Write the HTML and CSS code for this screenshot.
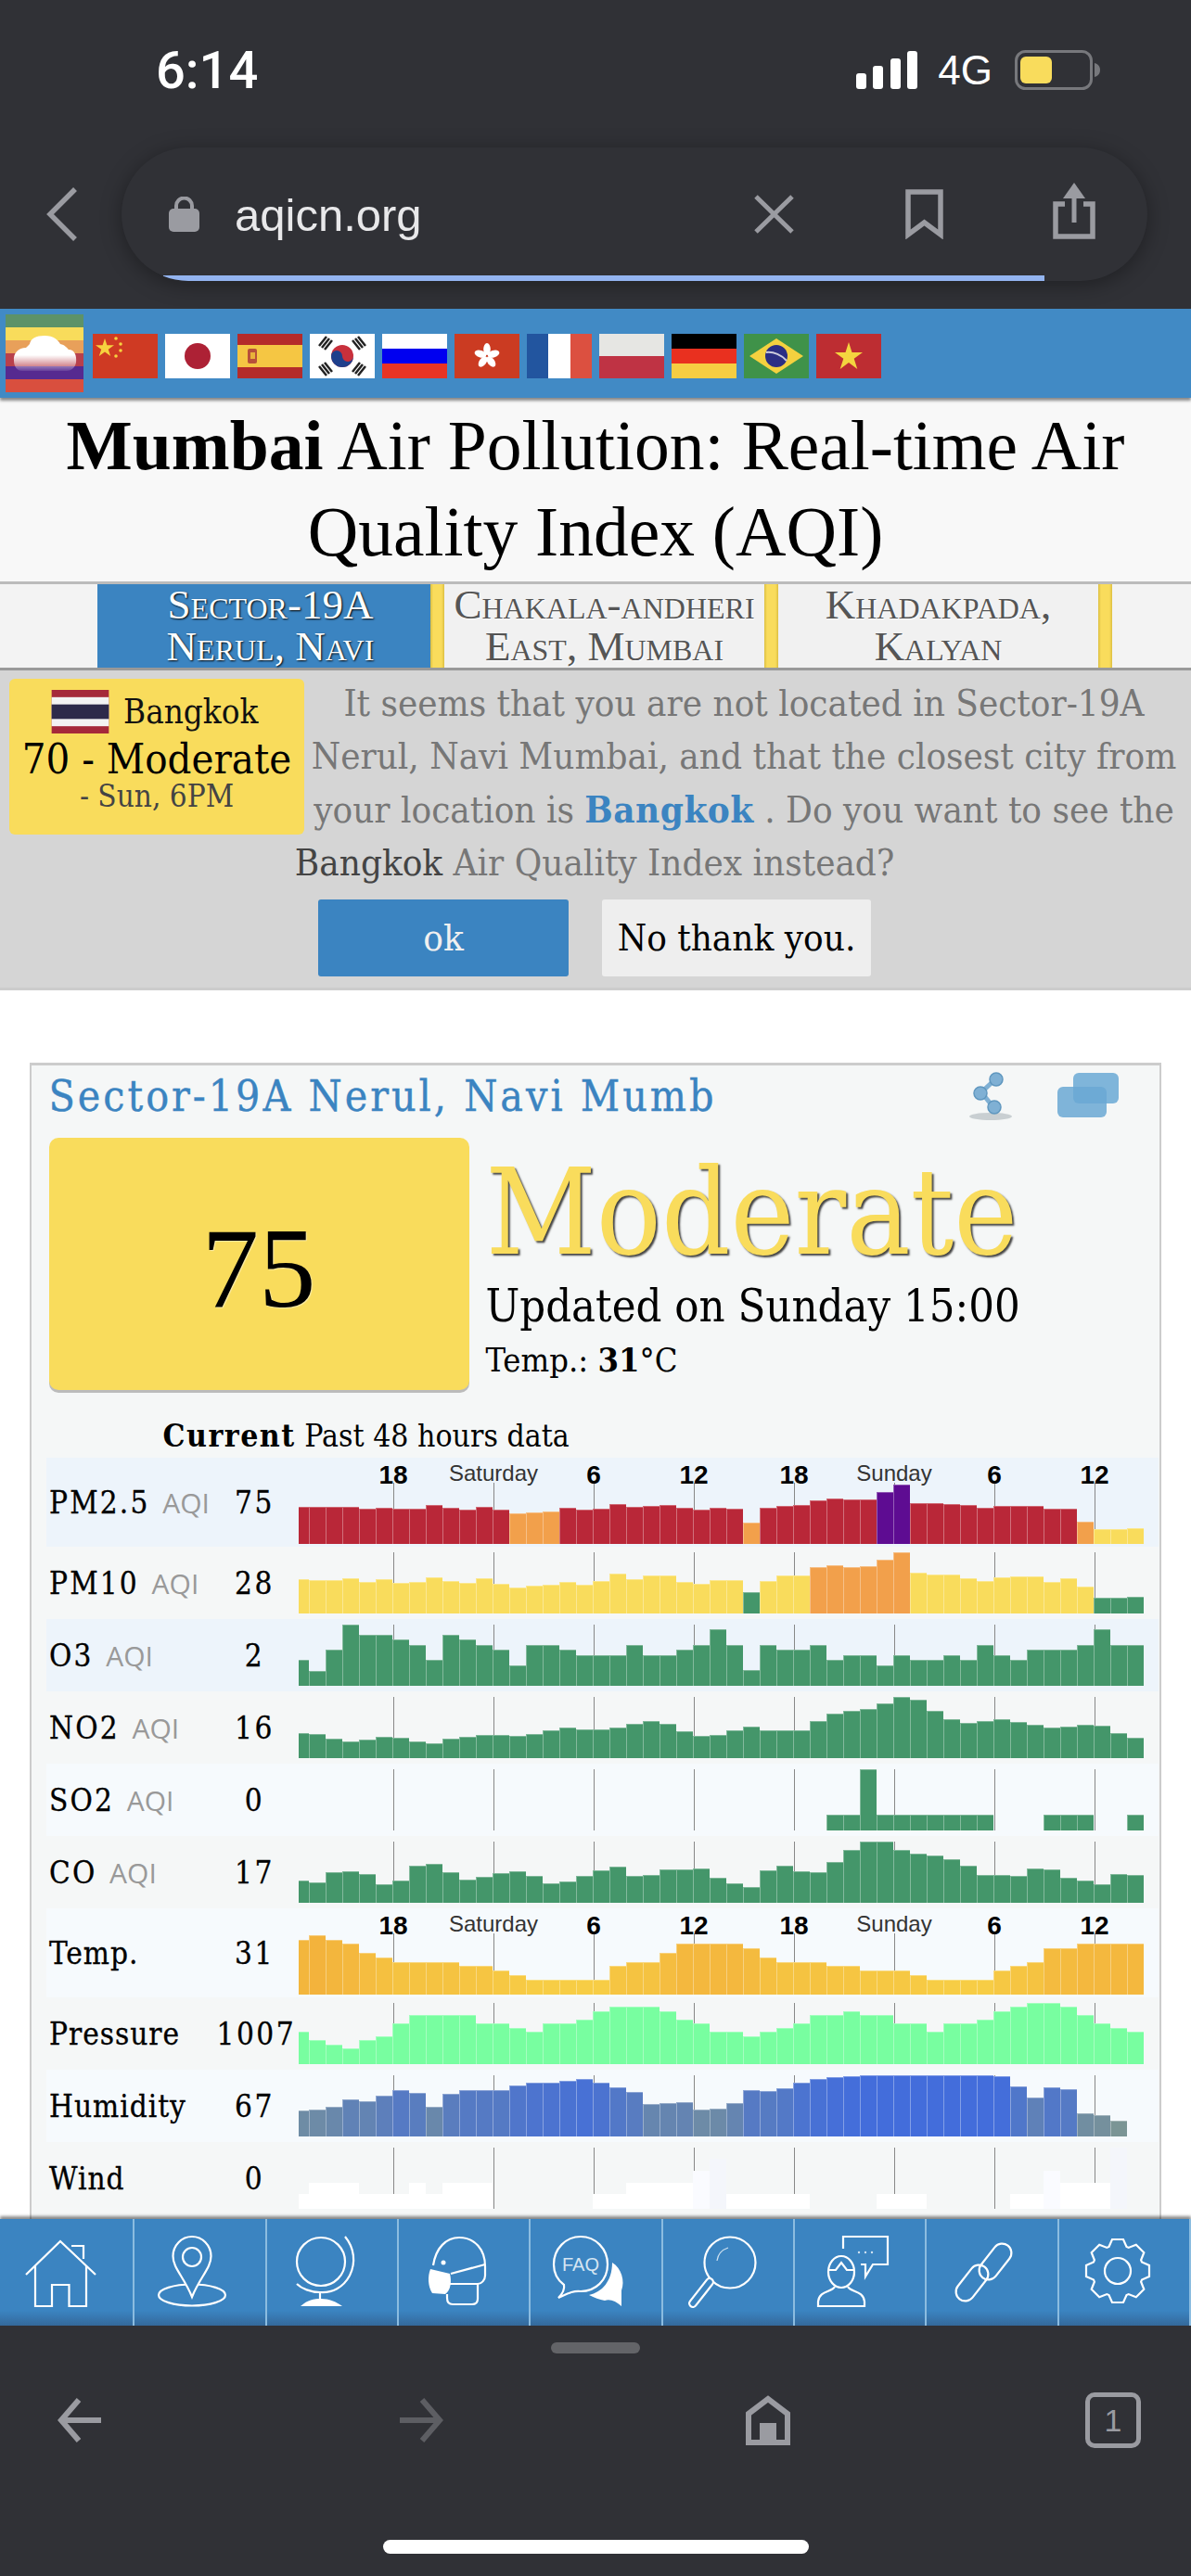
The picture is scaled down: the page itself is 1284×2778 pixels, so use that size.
FILE: index.html
```html
<!DOCTYPE html>
<html lang="en">
<head>
<meta charset="utf-8">
<title>Mumbai Air Pollution</title>
<link rel="stylesheet" href="styles.css">
</head>
<body>
<div class="phone">
  <header class="chrome-top">
    <div class="status">
      <span class="clock">6:14</span>
      <div class="status-right">
        <svg class="signal" width="66" height="41" viewBox="0 0 66 41"><rect x="0" y="24" width="11" height="17" rx="3"/><rect x="18" y="16" width="11" height="25" rx="3"/><rect x="37" y="8" width="11" height="33" rx="3"/><rect x="55" y="0" width="11" height="41" rx="3"/></svg>
        <span class="net">4G</span>
        <svg class="battery" width="93" height="43" viewBox="0 0 93 43"><rect x="1.500" y="1.500" width="81" height="40" rx="10" fill="none" stroke="#77787c" stroke-width="3"/><rect x="6" y="7" width="34" height="29" rx="6" fill="#f9dc5c"/><path d="M86 14c4 1 6 4 6 7.500s-2 6.500-6 7.500z" fill="#77787c"/></svg>
      </div>
    </div>
    <div class="toolbar">
      <svg class="tb-back" width="35" height="58" viewBox="0 0 35 58"><path d="M32 2 5 29 32 56" fill="none" stroke="#9a9ba1" stroke-width="5.500"/></svg>
      <div class="url">
        <svg width="33" height="38" viewBox="0 0 33 38"><path d="M8 16V10a8.500 8.500 0 0 1 17 0v6" fill="none" stroke="#9a9ba1" stroke-width="4"/><rect y="13" width="33" height="25" rx="5" fill="#9a9ba1"/></svg>
        <span class="host">aqicn.org</span>
        <svg class="u-x" width="43" height="42" viewBox="0 0 43 42"><path d="M2 2 41 40M41 2 2 40" stroke="#9a9ba1" stroke-width="5"/></svg>
        <svg class="u-mark" width="41" height="54" viewBox="0 0 41 54"><path d="M3 3H38V49L20.500 36 3 49Z" fill="none" stroke="#9a9ba1" stroke-width="5.500"/></svg>
        <svg class="u-share" width="48" height="61" viewBox="0 0 48 61"><path d="M14 23H4V58H44V23H34" fill="none" stroke="#9a9ba1" stroke-width="5.500"/><path d="M24 14V43" stroke="#9a9ba1" stroke-width="5"/><path d="M24 0 36 17H12Z" fill="#9a9ba1"/></svg>
        <div class="progress"></div>
      </div>
    </div>
  </header>

  <main class="page">
    <div class="flagbar">
      <svg class="logo" width="84" height="84" viewBox="0 0 84 84">
        <defs><linearGradient id="cl" x1="0" y1="0" x2="0" y2="1"><stop offset=".55" stop-color="#fff"/><stop offset="1" stop-color="#fff" stop-opacity=".1"/></linearGradient></defs>
        <rect width="84" height="14" fill="#5d9268"/><rect y="14" width="84" height="14" fill="#f8dc5b"/><rect y="28" width="84" height="14" fill="#e8a05a"/><rect y="42" width="84" height="14" fill="#b8404c"/><rect y="56" width="84" height="14" fill="#562a90"/><rect y="70" width="84" height="14" fill="#d94f3e"/>
        <path d="M9 50C8 42 14 36 22 36 24 34 25 33 26 32 27 26 33 23 42 23 52 23 57 28 59 32 64 33 66 36 68 38 74 38 77 44 76 52 75 58 70 61 66 61H18C12 61 9 56 9 50Z" fill="url(#cl)"/>
      </svg>
      <div class="flags">
        <svg class="flag" viewBox="0 0 70 48"><rect width="70" height="48" fill="#cf3a23"/><path d="M13 5 15.400 12.300 23 12.300 16.800 16.800 19.200 24 13 19.600 6.800 24 9.200 16.800 3 12.300 10.600 12.300Z" fill="#f6d23f"/><g fill="#f6d23f"><circle cx="25" cy="5" r="1.800"/><circle cx="30" cy="11" r="1.800"/><circle cx="30" cy="18" r="1.800"/><circle cx="25" cy="24" r="1.800"/></g></svg>
        <svg class="flag" viewBox="0 0 70 48"><rect width="70" height="48" fill="#fff"/><circle cx="35" cy="24" r="14" fill="#ad2135"/></svg>
        <svg class="flag" viewBox="0 0 70 48"><rect width="70" height="48" fill="#b42b2a"/><rect y="12" width="70" height="24" fill="#f5c643"/><rect x="11" y="16" width="10" height="16" rx="2" fill="#b8503a"/><rect x="14" y="20" width="5" height="7" fill="#e8b23a"/></svg>
        <svg class="flag" viewBox="0 0 70 48"><rect width="70" height="48" fill="#fff"/><circle cx="35" cy="24" r="12" fill="#c8303c"/><path d="M23 24A6 6 0 0 1 35 24 6 6 0 0 0 47 24 12 12 0 0 1 23 24Z" fill="#1f3f8c"/><g stroke="#222" stroke-width="2.500"><path d="M10 13 18 3M13 15 21 5M16 17 24 7"/><path d="M46 7 54 17M49 5 57 15M52 3 60 13"/><path d="M10 35 18 45M13 33 21 43M16 31 24 41"/><path d="M46 41 54 31M49 43 57 33M52 45 60 35"/></g></svg>
        <svg class="flag" viewBox="0 0 70 48"><rect width="70" height="16" fill="#fff"/><rect y="16" width="70" height="16" fill="#0000f0"/><rect y="32" width="70" height="16" fill="#e93424"/></svg>
        <svg class="flag" viewBox="0 0 70 48"><rect width="70" height="48" fill="#cb3b22"/><g fill="#fff"><ellipse cx="35" cy="16.500" rx="3.800" ry="6.500"/><ellipse cx="42.100" cy="21.700" rx="3.800" ry="6.500" transform="rotate(72 42.100 21.700)"/><ellipse cx="39.400" cy="30" rx="3.800" ry="6.500" transform="rotate(144 39.400 30)"/><ellipse cx="30.600" cy="30" rx="3.800" ry="6.500" transform="rotate(216 30.600 30)"/><ellipse cx="27.900" cy="21.700" rx="3.800" ry="6.500" transform="rotate(288 27.900 21.700)"/></g></svg>
        <svg class="flag" viewBox="0 0 70 48"><rect width="23" height="48" fill="#22559f"/><rect x="23" width="24" height="48" fill="#fff"/><rect x="47" width="23" height="48" fill="#dc5040"/></svg>
        <svg class="flag" viewBox="0 0 70 48"><rect width="70" height="24" fill="#e6e6e3"/><rect y="24" width="70" height="24" fill="#bf3344"/></svg>
        <svg class="flag" viewBox="0 0 70 48"><rect width="70" height="16" fill="#000"/><rect y="16" width="70" height="16" fill="#e9301f"/><rect y="32" width="70" height="16" fill="#f6cd42"/></svg>
        <svg class="flag" viewBox="0 0 70 48"><rect width="70" height="48" fill="#3f9249"/><path d="M35 5 64 24 35 43 6 24Z" fill="#f4d13f"/><circle cx="35" cy="24" r="12" fill="#2b2f84"/><path d="M24 20C32 19 41 23 46 29" stroke="#ccd" stroke-width="2" fill="none"/></svg>
        <svg class="flag" viewBox="0 0 70 48"><rect width="70" height="48" fill="#bd2d32"/><path d="M35 9 38.500 20 50 20 40.700 26.800 44.300 38 35 31 25.700 38 29.300 26.800 20 20 31.500 20Z" fill="#f4d53f"/></svg>
      </div>
    </div>

    <h1 class="title"><b>Mumbai</b> Air Pollution: Real-time Air Quality Index (AQI)</h1>

    <nav class="tabs">
      <a class="tab tab-active">Sector-19A<br>Nerul, Navi</a>
      <a class="tab tab-two">Chakala-andheri<br>East, Mumbai</a>
      <a class="tab tab-three">Khadakpada,<br>Kalyan</a>
    </nav>

    <section class="notice">
      <div class="near">
        <div class="near-city">
          <svg width="63" height="47" viewBox="0 0 63 48"><rect width="63" height="48" fill="#a5293a"/><rect y="8" width="63" height="32" fill="#f3f3f3"/><rect y="16" width="63" height="16" fill="#2d2a4a"/></svg>
          <span>Bangkok</span>
        </div>
        <div class="near-aqi">70 - Moderate</div>
        <div class="near-time">- Sun, 6PM</div>
      </div>
      <p class="notice-text">It seems that you are not located in Sector-19A<br>Nerul, Navi Mumbai, and that the closest city from<br>your location is <a class="city-link">Bangkok</a> . Do you want to see the<br><span class="city-dark">Bangkok</span> Air Quality Index instead?</p>
      <div class="notice-actions">
        <a class="btn btn-ok">ok</a>
        <a class="btn btn-no">No thank you.</a>
      </div>
    </section>

    <section class="card">
      <div class="card-head">
        <h2 class="station">Sector-19A Nerul, Navi Mumb</h2>
        <svg class="ic-share" width="46" height="52" viewBox="0 0 46 52"><ellipse cx="23" cy="48" rx="23" ry="4" fill="#c9cfd2"/><g fill="#7fb0d4" stroke="#5f97bf" stroke-width="1.500"><path d="M29 7 13 22 26 38" fill="none" stroke="#7fb0d4" stroke-width="5"/><circle cx="29" cy="8" r="7"/><circle cx="12" cy="23" r="7"/><circle cx="27" cy="38" r="7"/></g></svg>
        <svg class="ic-copy" width="66" height="48" viewBox="0 0 66 48"><rect x="17" width="49" height="33" rx="6" fill="#7fb5da"/><rect y="15" width="53" height="33" rx="6" fill="#6aa8d3" fill-opacity=".85"/></svg>
      </div>
      <div class="summary">
        <div class="aqi-box">75</div>
        <div class="summary-text">
          <div class="level">Moderate</div>
          <div class="updated">Updated on Sunday 15:00</div>
          <div class="temp">Temp.: <b>31</b>°C</div>
        </div>
      </div>
      <div class="table-head"><b>Current</b> Past 48 hours data</div>
      <div class="table">
        <div class="row row-tint ticked"><div class="name">PM2.5 <i>AQI</i></div><div class="val">75</div><div class="chart" data-series="pm25"></div></div>
        <div class="row"><div class="name">PM10 <i>AQI</i></div><div class="val">28</div><div class="chart" data-series="pm10"></div></div>
        <div class="row row-tint"><div class="name">O3 <i>AQI</i></div><div class="val">2</div><div class="chart" data-series="o3"></div></div>
        <div class="row"><div class="name">NO2 <i>AQI</i></div><div class="val">16</div><div class="chart" data-series="no2"></div></div>
        <div class="row row-pale"><div class="name">SO2 <i>AQI</i></div><div class="val">0</div><div class="chart" data-series="so2"></div></div>
        <div class="row"><div class="name">CO <i>AQI</i></div><div class="val">17</div><div class="chart" data-series="co"></div></div>
        <div class="row row-pale ticked"><div class="name name-plain">Temp.</div><div class="val">31</div><div class="chart" data-series="temp"></div></div>
        <div class="row"><div class="name name-plain">Pressure</div><div class="val">1007</div><div class="chart" data-series="pressure"></div></div>
        <div class="row row-pale"><div class="name name-plain">Humidity</div><div class="val">67</div><div class="chart" data-series="humidity"></div></div>
        <div class="row"><div class="name name-plain">Wind</div><div class="val">0</div><div class="chart" data-series="wind"></div></div>
      </div>
    </section>
  </main>

  <nav class="dock">
    <a class="dock-item"><svg viewBox="0 0 80 80"><path d="M3 43 40 7 78 43M13 34V77H31V54H49.500V77H68V34M52 12H65V26"/></svg></a>
    <a class="dock-item"><svg viewBox="0 0 80 80"><ellipse cx="40" cy="65" rx="36" ry="11.500"/><path class="solid" d="M40 67C31 45 19.500 36 19.500 23A20.500 21 0 0 1 60.500 23C60.500 36 49 45 40 67Z"/><circle cx="40" cy="24" r="10"/></svg></a>
    <a class="dock-item"><svg viewBox="0 0 80 80"><circle cx="36" cy="29" r="26"/><path d="M62 2C72 14 74 30 67 44 60 57 48 63 35 62 25 62 15 58 10 53"/><path d="M35 62V69"/><path class="white" d="M14 77C22 70 28 69 36 69 45 69 52 72 59 77Z"/></svg></a>
    <a class="dock-item"><svg viewBox="0 0 80 80"><path d="M15 33C18 14 29 3 43 3 60 3 71 16 71 34V44C71 49 67 53 63 53H30M63 53V69C63 73 61 75 57 75H36C32 75 30 72 30 68V64"/><path d="M34 42 71 32"/><circle class="white" cx="26" cy="30" r="2.500"/><path class="white" d="M12 37 33 42C35 50 34 60 28 64L14 63C9 55 9 45 12 37Z"/></svg></a>
    <a class="dock-item"><svg viewBox="0 0 80 80"><path d="M14 54C6 48 3 41 3 32 3 15 16 2 32 2 48 2 61 15 61 32 61 49 48 61 32 61 24 60 17 64 8 68 13 63 15 59 14 54Z"/><text class="faq" x="32" y="39" text-anchor="middle">FAQ</text><path class="white" d="M66 30C76 36 80 50 76 60L76 77C70 72 64 69 58 71 52 70 47 68 41 65 55 62 66 50 66 30Z"/></svg></a>
    <a class="dock-item"><svg viewBox="0 0 80 80"><circle cx="50" cy="30" r="27.500"/><path d="M36 28C37 20 42 16 48 14" class="thin"/><path class="handle-out" d="M28 51 10 74"/><path class="handle-in" d="M28 51 10 74"/></svg></a>
    <a class="dock-item"><svg viewBox="0 0 80 80"><path d="M30 15V2H78V32H62L54 45V32H49"/><g class="dots"><circle cx="47" cy="19" r="1.200"/><circle cx="54" cy="19" r="1.200"/><circle cx="61" cy="19" r="1.200"/></g><ellipse cx="28" cy="40" rx="14" ry="17"/><path d="M14 38H22L28 30 34 38H42"/><path d="M21 56C18 62 4 60 3 72V77H53V72C52 60 38 62 35 56"/></svg></a>
    <a class="dock-item"><svg viewBox="0 0 80 80"><rect x="42" y="7" width="20" height="44" rx="10" transform="rotate(38 52 29)"/><rect x="17" y="30" width="20" height="44" rx="10" transform="rotate(38 27 52)"/></svg></a>
    <a class="dock-item"><svg viewBox="0 0 80 80"><g transform="translate(41 39)"><polygon points="-9.500,-26 -6,-34 6,-34 9.500,-26 11.670,-25.100 19.800,-28.300 28.300,-19.800 25.100,-11.670 26,-9.500 34,-6 34,6 26,9.500 25.100,11.670 28.300,19.800 19.800,28.300 11.670,25.100 9.500,26 6,34 -6,34 -9.500,26 -11.670,25.100 -19.800,28.300 -28.300,19.800 -25.100,11.670 -26,9.500 -34,6 -34,-6 -26,-9.500 -25.100,-11.670 -28.300,-19.800 -19.800,-28.300 -11.670,-25.100"/><circle r="14"/></g></svg></a>
  </nav>

  <footer class="chrome-bottom">
    <div class="handle"></div>
    <div class="bottom-icons">
      <svg width="49" height="48" viewBox="0 0 49 48"><path d="M49 24H5M25 2 6 24 25 46" fill="none" stroke="#9a9ba1" stroke-width="6"/></svg>
      <svg width="49" height="48" viewBox="0 0 49 48"><path d="M0 24H44M24 2 43 24 24 46" fill="none" stroke="#5d5e63" stroke-width="6"/></svg>
      <svg width="48" height="54" viewBox="0 0 48 54"><path d="M3 20 24 4 45 20V51H3Z" fill="none" stroke="#9a9ba1" stroke-width="6"/><rect x="15" y="30" width="18" height="21" fill="#9a9ba1"/></svg>
      <div class="tabs-count">1</div>
    </div>
    <div class="home-indicator"></div>
  </footer>
</div>
<script src="script.js"></script>
</body>
</html>
```
FILE: styles.css
```css
* { box-sizing: border-box; }
html, body { margin: 0; padding: 0; }
body { font-family: "DejaVu Serif Condensed", "DejaVu Serif", serif; background: #303136; }
a { text-decoration: none; }
.phone { width: 1284px; height: 2778px; display: flex; flex-direction: column; overflow: hidden; }

/* browser chrome */
.chrome-top { height: 333px; background: #303136; flex: none; }
.status { height: 159px; display: flex; justify-content: space-between; padding: 54px 97px 0 168px; align-items: flex-start; }
.clock { font: 500 56px/44px Roboto, sans-serif; color: #fff; }
.status-right { display: flex; align-items: center; gap: 22px; height: 43px; }
.signal { fill: #fff; }
.net { font: 44px/43px "Liberation Sans", sans-serif; color: #fff; }
.battery { margin-left: 2px; }
.toolbar { display: flex; padding-left: 49px; }
.tb-back { margin: 43px 47px 0 0; }
.url { position: relative; width: 1106px; height: 144px; border-radius: 72px; background: #303136; box-shadow: 0 4px 22px rgba(0,0,0,.35); display: flex; align-items: flex-start; padding-left: 51px; overflow: hidden; }
.url > svg { flex: none; margin-top: 53px; }
.host { font: 49px/48px "Liberation Sans", sans-serif; color: #e8e8ea; margin: 49px 0 0 38px; width: 361px; }
.url .u-x { margin: 51px 0 0 199px; }
.url .u-mark { margin: 45px 0 0 120px; }
.url .u-share { margin: 38px 0 0 117px; }
.progress { position: absolute; left: 45px; bottom: 0; width: 950px; height: 6px; background: #93b4f0; }

/* page */
.page { flex: 1; min-height: 0; background: #fff; overflow: hidden; }
.flagbar { height: 96px; background: #418ac5; display: flex; padding: 6px 0 0 6px; box-shadow: 0 3px 3px rgba(0,0,0,.45); position: relative; }
.flags { display: flex; gap: 8px; margin: 21px 0 0 10px; height: 48px; }
.flag { width: 70px; height: 48px; display: block; }
.title { margin: 0; height: 198px; padding-top: 6px; background: #f8f8f8; text-align: center; font: 400 75.500px/92.500px "Liberation Serif", serif; color: #000; }
.tabs { display: flex; height: 96px; padding-left: 105px; background: #f3f3f3; border-top: 3px solid #bbb; border-bottom: 3px solid #999; font: 45px/45px "Liberation Serif", serif; font-variant: small-caps; }
.tab { display: block; text-align: center; color: #555; padding-right: 15px; text-shadow: 1px 1px 1px #fff; --face: #f1f1f1; background: linear-gradient(90deg, var(--face) calc(100% - 15px), #dcbf42 calc(100% - 15px), #f9dc5c calc(100% - 12px), #f9dc5c calc(100% - 3px), #dcbf42 100%); }
.tab-active { width: 374px; padding-left: 14px; --face: #3b84c1; color: #fff; text-shadow: 1px 1px 2px #000; }
.tab-two { width: 360px; }
.tab-three { width: 360px; }
.notice { height: 345px; padding: 7px 8px 0 6px; background: #d5d5d5; border-bottom: 3px solid #ccc; color: #777; }
.near { float: left; width: 318px; height: 168px; margin: 2px 0 0 4px; background: #f9dc5c; border-radius: 6px; text-align: center; color: #000; }
.near-city { display: flex; align-items: center; gap: 15px; padding: 10px 0 0 45px; height: 61px; font-size: 36.500px; color: #111; }
.near-aqi { font-size: 45px; line-height: 52px; white-space: nowrap; }
.near-time { font-size: 33px; line-height: 28px; color: #444; white-space: nowrap; }
.notice-text { margin: 0; font-size: 40px; line-height: 57px; text-align: center; white-space: nowrap; }
.city-link { color: #3b84c1; font-weight: 700; letter-spacing: .5px; }
.city-dark { color: #444; }
.notice-actions { display: flex; justify-content: center; gap: 36px; margin-top: 11px; }
.btn { display: block; height: 83px; line-height: 83px; text-align: center; font-size: 40px; border-radius: 3px; }
.btn-ok { width: 270px; background: #3b84c1; color: #f0f0f0; }
.btn-no { width: 290px; background: #eee; color: #000; }

/* card */
.card { margin: 78px 32px 0; border: 2.500px solid #ccc; border-top-width: 3px; background: #f5f7f7; height: 1300px; padding-left: 15.500px; }
.card-head { display: flex; height: 78px; align-items: flex-start; }
.station { margin: 6px 0 0 3px; width: 992px; font-size: 46px; line-height: 54px; font-weight: 400; letter-spacing: 3px; color: #3b84c1; white-space: nowrap; -webkit-text-stroke: .4px #3b84c1; }
.ic-share { margin-top: 7px; }
.ic-copy { margin: 8px 0 0 49px; }
.summary { display: flex; height: 272px; padding-left: 3px; }
.aqi-box { width: 453px; height: 272px; background: #f9dc5c; border-radius: 10px; box-shadow: 0 3px 0 #bbb; text-align: center; font: 123px/281px "Liberation Serif", serif; text-shadow: 1px 1px 1px #fff7; }
.summary-text { margin-left: 18px; color: #000; }
.level { font-size: 129.500px; line-height: 138px; margin-top: 12px; color: #f9dc5c; text-shadow: 2px 2px 2px #444; white-space: nowrap; }
.updated { font-size: 48.500px; line-height: 62px; white-space: nowrap; }
.temp { font-size: 36px; line-height: 54px; white-space: nowrap; }
.table-head { height: 73px; padding: 30px 0 0 126px; font-size: 33.500px; line-height: 40px; white-space: nowrap; }
.table-head b { letter-spacing: 1.500px; }
.table { width: 1199px; }
.row { display: flex; height: 78px; align-items: center; background: #f5f7f7; }
.row-tint { background: #edf4fb; }
.row-pale { background: #f6fafd; }
.ticked { height: 96px; }
.name { width: 184px; padding-left: 3.500px; font-size: 33px; letter-spacing: 2.200px; white-space: nowrap; -webkit-text-stroke: .3px #000; }
.name-plain { letter-spacing: 1px; }
.name i { font: 30px "Open Sans", sans-serif; letter-spacing: 0; color: #999; margin-left: 2px; -webkit-text-stroke: 0; }
.val { width: 82px; text-align: center; font-size: 33px; letter-spacing: 2.500px; white-space: nowrap; -webkit-text-stroke: .3px #000; }
.chart { position: relative; width: 912px; height: 66px; margin-left: 6px; align-self: flex-end; margin-bottom: 6px; display: flex; align-items: flex-end; background-image: linear-gradient(90deg, #888 0 1px, transparent 1px); background-size: 108px 100%; background-position: 102px 0; }
.ticked .chart { margin-bottom: 3px; }
.bar { flex: none; width: 18px; border-left: 1px solid rgba(255,255,255,.34); border-top: 1.500px solid rgba(255,255,255,.3); position: relative; }
.bar-first { width: 11.500px; border-left: 0; }
.ticks { position: absolute; left: 48.500px; top: -21px; display: flex; font: 700 28px/26px "Liberation Sans", sans-serif; color: #000; z-index: 1; }
.ticks span { width: 108px; text-align: center; }
.ticks .day { font-weight: 400; font-size: 24px; color: #333; margin-top: -2px; }

/* dock */
.dock { flex: none; height: 115px; display: grid; grid-template-columns: repeat(9, 1fr); padding-left: 3px; position: relative; background: linear-gradient(#3b84c1 0 86%, #34699b 100%); box-shadow: 0 -3px 3px rgba(0,0,0,.45); }
.dock-item { display: block; border-right: 2.500px solid #8bbce0; padding: 17px 16px 0 0; text-align: center; }
.dock-item svg { width: 80px; height: 80px; fill: none; stroke: #fff; stroke-width: 2.200; }
.dock-item .solid { fill: #3b84c1; }
.dock-item .white { fill: #fff; stroke: none; }
.dock-item .thin { stroke-width: 1.300; stroke: #cfe2f1; }
.dock-item .dots { fill: #cfe2f1; stroke: none; }
.dock-item .faq { font: 400 20px "Liberation Sans", sans-serif; fill: #d5e5f2; stroke: none; }
.dock-item .handle-out { stroke-width: 10; stroke-linecap: round; }
.dock-item .handle-in { stroke-width: 5.500; stroke-linecap: round; stroke: #3b84c1; }

/* bottom chrome */
.chrome-bottom { flex: none; height: 270px; background: #303136; position: relative; }
.handle { width: 96px; height: 12px; margin: 18px 0 0 594px; border-radius: 6px; background: #636468; }
.bottom-icons { display: grid; grid-template-columns: 371px 373px 366px 60px; align-items: center; height: 60px; margin-top: 42px; padding-left: 60px; }
.tabs-count { width: 60px; height: 60px; border: 5px solid #9a9ba1; border-radius: 10px; color: #9a9ba1; font: 34px/50px "Liberation Sans", sans-serif; text-align: center; }
.home-indicator { width: 459px; height: 15px; margin: 99px 0 0 413px; border-radius: 8px; background: #fff; }
```
FILE: script.js
```js
var N = null;
var SERIES = {
  pm25: { base: 375, tops: [256,256,256,256,262,258,262,260,250,259,263,255,264,277,274,269,259,264,260,247,256,251,250,259,264,257,260,306,259,251,250,233,229,232,232,208,182,242,244,246,250,257,252,253,253,261,262,303,326,326,325] },
  pm10: { base: 600, tops: [490,491,493,486,498,490,501,499,484,495,501,487,505,515,511,507,498,507,495,471,489,478,478,497,504,492,492,530,495,478,477,450,444,450,448,426,402,469,473,475,486,495,484,481,481,499,487,513,548,550,547] },
  o3: { base: 834, tops: [751,785,718,636,669,669,685,702,751,669,685,702,718,768,702,702,718,735,735,735,702,735,735,718,702,652,702,784,702,718,718,702,751,735,735,768,735,751,751,735,751,702,735,751,718,718,718,702,652,702,702] },
  no2: { base: 1068, tops: [986,989,1005,1013,1008,1000,1002,1014,1019,1006,999,992,992,997,990,977,970,976,976,968,956,949,958,980,996,992,977,966,977,978,977,947,923,916,908,890,870,878,915,942,954,948,943,950,960,969,965,960,964,986,1002] },
  so2: { base: 198, tops: [N,N,N,N,N,N,N,N,N,N,N,N,N,N,N,N,N,N,N,N,N,N,N,N,N,N,N,N,N,N,N,N,147,147,0,147,147,147,147,147,147,147,N,N,N,147,147,147,N,N,147] },
  co: { base: 306, tops: [235,241,207,205,212,247,233,185,180,207,230,223,210,203,220,243,237,218,200,190,219,216,199,197,196,224,243,256,202,187,205,208,175,135,108,108,135,147,154,165,185,215,217,218,196,199,225,235,245,214,215] },
  temp: { base: 603, tops: [425,410,425,439,468,482,497,497,497,497,511,511,526,540,555,555,555,555,555,511,497,497,468,439,439,439,439,453,482,497,497,497,511,511,526,526,526,540,555,555,555,555,526,511,497,453,453,439,439,439,439] },
  pressure: { base: 828, tops: [724,751,765,778,751,737,697,670,670,670,670,697,697,710,724,697,697,684,657,643,643,643,657,684,697,724,724,737,724,710,697,670,670,657,670,670,697,697,724,697,697,684,657,643,630,630,643,670,697,710,724] },
  humidity: { base: 1062, tops: [977,974,965,941,948,931,913,922,965,924,912,912,912,898,889,887,883,877,887,904,918,956,954,950,974,971,953,913,915,907,888,877,871,866,864,864,864,864,864,864,864,864,866,899,937,904,910,986,994,1012,N] },
  wind: { base: 1296, tops: [1247,1211,1211,1211,1247,1247,1247,1211,1247,1211,1211,1211,N,N,N,N,N,N,1247,1247,1211,1211,1211,1211,1173,1134,1247,1247,1247,1247,1247,N,N,N,N,1247,1247,1247,N,N,N,N,N,1247,1247,1173,1211,1211,1211,1098,N] }
};

var RED = "#b92738", ORANGE = "#f2a04b", PURPLE = "#5e0c92", YELLOW = "#f9dc5c", GREEN = "#44966a";

function pick(list, i) { return list.indexOf(i) >= 0; }
function mix(a, b, t) {
  t = Math.max(0, Math.min(1, t));
  return "rgb(" + a.map(function (v, k) { return Math.round(v + (b[k] - v) * t); }).join(",") + ")";
}
var COLOR = {
  pm25: function (i) { return pick([13,14,15,27,47], i) ? ORANGE : pick([35,36], i) ? PURPLE : pick([48,49,50], i) ? YELLOW : RED; },
  pm10: function (i) { return pick([27,48,49,50], i) ? GREEN : pick([31,32,33,34,35,36], i) ? ORANGE : YELLOW; },
  o3: function () { return GREEN; }, no2: function () { return GREEN; }, so2: function () { return GREEN; }, co: function () { return GREEN; },
  temp: function (i, h) { return mix([247,205,69], [243,179,60], (h - 16) / 48); },
  pressure: function () { return "#78fea0"; },
  humidity: function (i, h) { return mix([123,149,149], [67,109,219], (h - 17) / 49); },
  wind: function (i, h) { return h > 50 ? "#f4f6fb" : h > 40 ? "#fafbff" : "#fff"; }
};
var TICKS = ["18", "Saturday", "6", "12", "18", "Sunday", "6", "12"];

document.querySelectorAll(".chart").forEach(function (chart) {
  var key = chart.getAttribute("data-series"), s = SERIES[key];
  s.tops.forEach(function (top, i) {
    var bar = document.createElement("div");
    bar.className = i === 0 ? "bar bar-first" : "bar";
    if (top !== null) {
      var h = (s.base - top) / 3;
      bar.style.height = h + "px";
      bar.style.background = COLOR[key](i, h);
      if (key === "wind") { bar.style.borderColor = "transparent"; }
    } else {
      bar.style.border = "0";
    }
    chart.appendChild(bar);
  });
  if (chart.parentNode.classList.contains("ticked")) {
    var t = document.createElement("div");
    t.className = "ticks";
    TICKS.forEach(function (label) {
      var sp = document.createElement("span");
      sp.textContent = label;
      if (label.length > 2) { sp.className = "day"; }
      t.appendChild(sp);
    });
    chart.appendChild(t);
  }
});
```
